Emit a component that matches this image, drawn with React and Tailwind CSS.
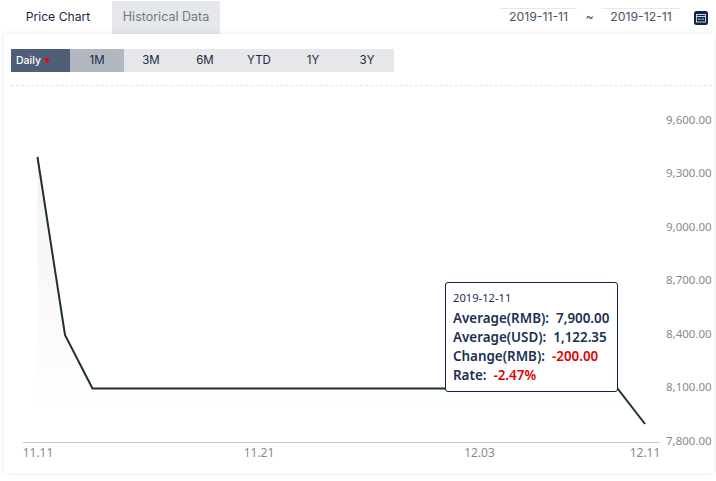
import React from 'react';

const ranges = ['1M', '3M', '6M', 'YTD', '1Y', '3Y'];
const yLabels = [
  ['9,600.00', 124],
  ['9,300.00', 177],
  ['9,000.00', 231],
  ['8,700.00', 284],
  ['8,400.00', 338],
  ['8,100.00', 391],
  ['7,800.00', 444.5],
];
const xLabels = [
  ['11.11', 38],
  ['11.21', 259],
  ['12.03', 479.5],
  ['12.11', 645],
];

function CalendarIcon() {
  return (
    <svg width="14" height="14" viewBox="0 0 14 14">
      <rect width="14" height="14" rx="2.5" fill="#0f2547" />
      <rect x="2.5" y="3.5" width="9" height="7.5" fill="none" stroke="#c9d0da" strokeWidth="1" />
      <rect x="3" y="5" width="8" height="1" fill="#c9d0da" />
      <rect x="4" y="7.5" width="2.5" height="1.5" fill="#8d99aa" />
      <rect x="7.5" y="7.5" width="2.5" height="1.5" fill="#8d99aa" />
    </svg>
  );
}

function Chart() {
  return (
    <svg width="716" height="388" viewBox="0 86 716 388" className="block">
      <defs>
        <linearGradient id="area" gradientUnits="userSpaceOnUse" x1="0" y1="157" x2="0" y2="420">
          <stop offset="0" stopColor="#000000" stopOpacity="0.05" />
          <stop offset="1" stopColor="#000000" stopOpacity="0" />
        </linearGradient>
      </defs>
      <path d="M37.5 157 L65 335 L92.5 388.5 L617.5 388.5 L645 424 L645 442 L37.5 442 Z" fill="url(#area)" />
      <path
        d="M37.5 157 L65 335 L92.5 388.5 L617.5 388.5 L645 424"
        fill="none"
        stroke="#1f3320"
        strokeWidth="2"
      />
      <line x1="23" y1="442.5" x2="660" y2="442.5" stroke="#c8c8c8" />
      {yLabels.map(([label, y]) => (
        <text key={label} x="666" y={y} fontSize="11.5" fill="#8a8a8a">
          {label}
        </text>
      ))}
      {xLabels.map(([label, x]) => (
        <text key={label} x={x} y="457" fontSize="12" fill="#8a8a8a" textAnchor="middle">
          {label}
        </text>
      ))}
    </svg>
  );
}

export default function App() {
  return (
    <div className="w-[716px] h-[481px] overflow-hidden bg-white font-['Noto_Sans','Liberation_Sans',sans-serif] text-xs">
      {/* tabs + dates */}
      <div className="flex items-end h-[34px] pl-1 pr-2">
        <div className="w-[108px] h-[33px] flex items-center justify-center bg-white text-[#1a2a45] font-['Inter',sans-serif] text-[12.2px]">
          Price Chart
        </div>
        <div className="w-[108px] h-[33px] flex items-center justify-center bg-[#e5e7ea] text-[#6d7785] font-['Inter',sans-serif] text-[12.5px]">
          Historical Data
        </div>
        <div className="ml-auto flex items-center h-[34px] text-[#4a5465] font-['Inter',sans-serif] text-[12.3px]">
          <div className="w-[77px] h-[19px] border-t border-[#e8e8e8] flex items-center justify-center">2019-11-11</div>
          <div className="w-[25px] text-center">~</div>
          <div className="w-[78px] h-[19px] border-t border-[#e8e8e8] flex items-center justify-center">2019-12-11</div>
          <div className="ml-[14px] mt-[2px]">
            <CalendarIcon />
          </div>
        </div>
      </div>

      {/* panel */}
      <div className="relative ml-1 w-[710px] h-[439px] bg-white shadow-[0_0_6px_rgba(0,0,0,0.09)]">
        <div className="pl-[7px] pt-[15px] pr-[2px]">
          <div className="flex h-[23px] w-[383px] bg-[#e5e7ea] text-[#1a2a45] font-['Inter',sans-serif] text-[11.5px]">
            <div className="w-[59px] flex items-center pl-[5px] gap-[3px] bg-[#4f5f78] text-white text-[10.5px] font-medium">
              Daily
              <span className="w-0 h-0 border-x-[3px] border-x-transparent border-t-[6px] border-t-[#e01010]" />
            </div>
            {ranges.map((r, i) => (
              <div
                key={r}
                className={
                  i === 0
                    ? 'w-[54px] flex items-center justify-center bg-[#b2b8c1]'
                    : 'w-[54px] flex items-center justify-center'
                }
              >
                {r}
              </div>
            ))}
          </div>
          <div className="mt-[13px] border-t border-dashed border-[#e4e4e4]" />
        </div>
      </div>

      {/* chart over the panel */}
      <div className="absolute left-0 top-[86px] w-[716px] h-[388px]">
        <Chart />
      </div>

      {/* tooltip */}
      <div className="absolute left-[445px] top-[282px] w-[173px] h-[110px] rounded-[3px] border border-[#0f2547] bg-white px-[7px] pt-[7px] text-[#1a2f52] text-[13.4px] leading-[19px] font-semibold">
        <div className="text-[11.2px] font-normal leading-[16px] mb-[3px]">2019-12-11</div>
        <div className="flex gap-[7px]"><span>Average(RMB):</span><span>7,900.00</span></div>
        <div className="flex gap-[7px]"><span>Average(USD):</span><span>1,122.35</span></div>
        <div className="flex gap-[7px]"><span>Change(RMB):</span><span className="text-[#e00000]">-200.00</span></div>
        <div className="flex gap-[7px]"><span>Rate:</span><span className="text-[#e00000]">-2.47%</span></div>
      </div>
    </div>
  );
}
